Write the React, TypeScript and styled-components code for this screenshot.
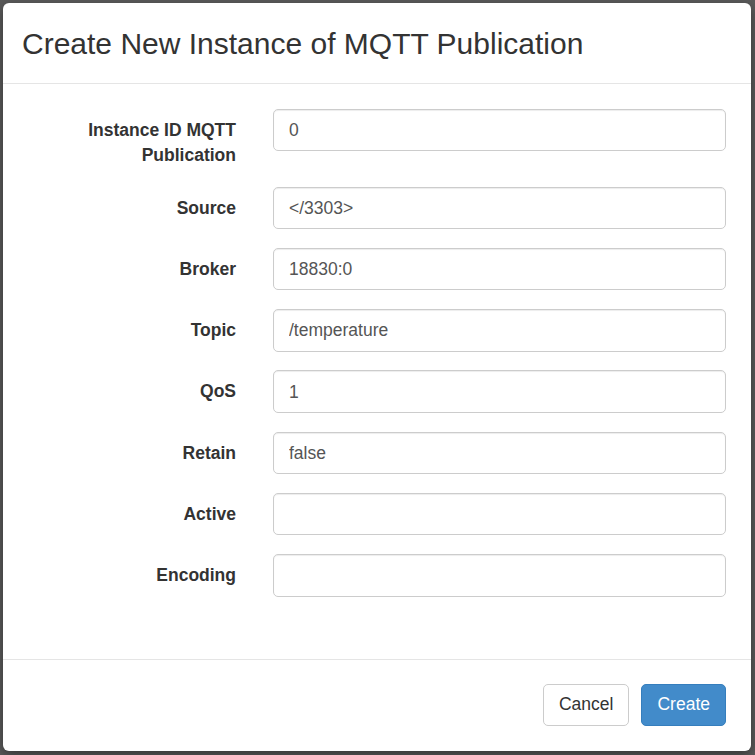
import { createGlobalStyle } from "styled-components";
import styled from "styled-components";

const fields = [
  { label: "Instance ID MQTT Publication", value: "0" },
  { label: "Source", value: "</3303>" },
  { label: "Broker", value: "18830:0" },
  { label: "Topic", value: "/temperature" },
  { label: "QoS", value: "1" },
  { label: "Retain", value: "false" },
  { label: "Active", value: "" },
  { label: "Encoding", value: "" },
];

const GlobalStyle = createGlobalStyle`
  html, body {
    margin: 0;
    padding: 0;
    background: #5a5a5a;
  }

  body {
    font-family: "Liberation Sans", Arial, sans-serif;
    color: #333333;
  }
`;

const Backdrop = styled.div`
  width: 755px;
  height: 755px;
  box-sizing: border-box;
  padding: 3px 4px 4px 3px;
`;

const Modal = styled.div`
  display: flex;
  flex-direction: column;
  height: 100%;
  background: #ffffff;
  border-radius: 6px;
  box-shadow: 0 4px 12px rgba(0, 0, 0, 0.4);
  overflow: hidden;
`;

const Header = styled.div`
  display: flex;
  align-items: center;
  height: 80px;
  padding: 0 22px 0 19px;
  border-bottom: 1px solid #e5e5e5;
`;

const Title = styled.h4`
  margin: 0;
  padding-top: 2px;
  font-size: 30px;
  font-weight: 400;
  line-height: 1.1;
  color: #333333;
`;

const Body = styled.form`
  display: flex;
  flex-direction: column;
  gap: 18.75px;
  padding: 25px 25px 62px 19px;
  flex: 1;
`;

const FormRow = styled.div`
  display: grid;
  grid-template-columns: 214px minmax(0, 1fr);
  column-gap: 37px;
  align-items: start;
`;

const FieldLabel = styled.label`
  padding-top: 9px;
  text-align: right;
  font-size: 17.5px;
  font-weight: 700;
  line-height: 25px;
  color: #333333;
`;

const TextInput = styled.input`
  box-sizing: border-box;
  width: 100%;
  height: 42.5px;
  padding: 1px 15px 0;
  border: 1px solid #cccccc;
  border-radius: 5px;
  background: #ffffff;
  box-shadow: inset 0 1px 1px rgba(0, 0, 0, 0.075);
  font-family: inherit;
  font-size: 17.5px;
  color: #555555;
  outline: none;
`;

const Footer = styled.div`
  display: flex;
  justify-content: flex-end;
  gap: 12px;
  padding: 24px 25px 25px;
  border-top: 1px solid #e5e5e5;
`;

const Button = styled.button<{ $primary?: boolean }>`
  height: 42.5px;
  padding: 0 15px;
  border: 1px solid ${(p) => (p.$primary ? "#357ebd" : "#cccccc")};
  border-radius: 5px;
  background: ${(p) => (p.$primary ? "#428bca" : "#ffffff")};
  color: ${(p) => (p.$primary ? "#ffffff" : "#333333")};
  font-family: inherit;
  font-size: 17.5px;
  line-height: 25px;
  cursor: pointer;
`;

export default function App() {
  return (
    <>
      <GlobalStyle />
      <Backdrop>
        <Modal>
          <Header>
            <Title>Create New Instance of MQTT Publication</Title>
          </Header>
          <Body>
            {fields.map((field) => (
              <FormRow key={field.label}>
                <FieldLabel>{field.label}</FieldLabel>
                <TextInput defaultValue={field.value} type="text" />
              </FormRow>
            ))}
          </Body>
          <Footer>
            <Button type="button">Cancel</Button>
            <Button $primary type="button">
              Create
            </Button>
          </Footer>
        </Modal>
      </Backdrop>
    </>
  );
}
